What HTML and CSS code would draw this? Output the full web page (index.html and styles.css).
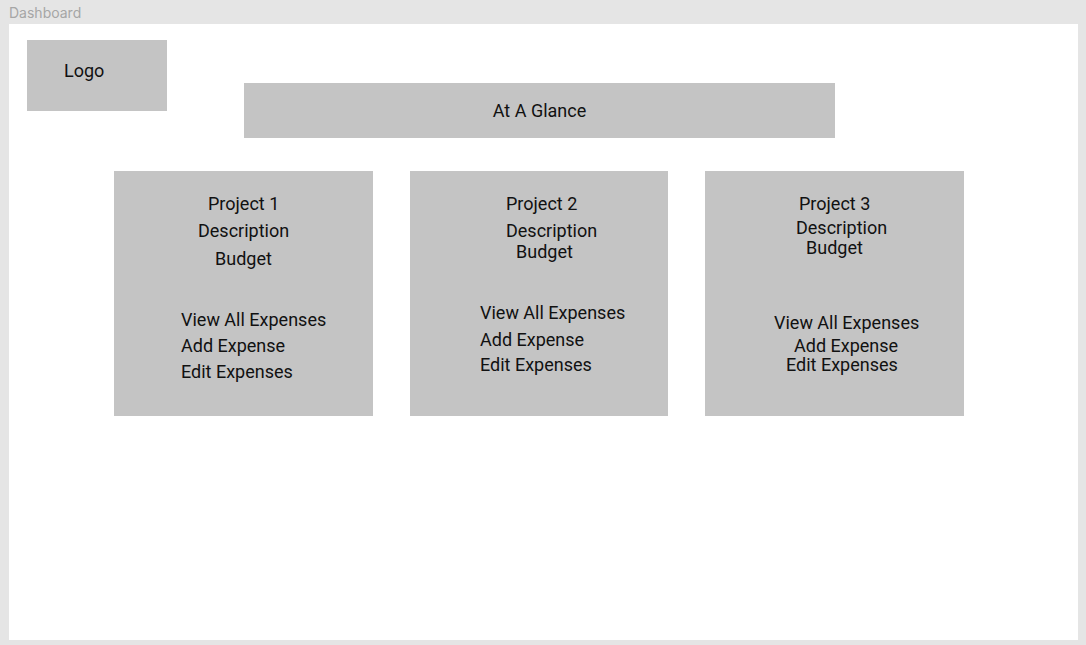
FILE: index.html
```html
<!DOCTYPE html>
<html lang="en">
<head>
<meta charset="UTF-8">
<meta name="viewport" content="width=device-width, initial-scale=1.0">
<title>Dashboard</title>
<link rel="stylesheet" href="styles.css">
</head>
<body>

<div class="frame-label">Dashboard</div>

<div class="frame">
    <div class="top-row">
        <div class="logo"><span class="line">Logo</span></div>
        <div class="glance">At A Glance</div>
    </div>

    <div class="cards">
        <div class="card card-1">
            <div class="line">Project 1</div>
            <div class="line">Description</div>
            <div class="line">Budget</div>
            <div class="line">View All Expenses</div>
            <div class="line">Add Expense</div>
            <div class="line">Edit Expenses</div>
        </div>
        <div class="card card-2">
            <div class="line">Project 2</div>
            <div class="line">Description</div>
            <div class="line">Budget</div>
            <div class="line">View All Expenses</div>
            <div class="line">Add Expense</div>
            <div class="line">Edit Expenses</div>
        </div>
        <div class="card card-3">
            <div class="line">Project 3</div>
            <div class="line">Description</div>
            <div class="line">Budget</div>
            <div class="line">View All Expenses</div>
            <div class="line">Add Expense</div>
            <div class="line">Edit Expenses</div>
        </div>
    </div>
</div>

</body>
</html>
```

FILE: styles.css
```css
body {
    margin: 0;
    background-color: #e5e5e5;
    font-family: Roboto, "Liberation Sans", sans-serif;
    color: #111;
}

.frame-label {
    height: 24px;
    padding-left: 9px;
    font-family: Inter, "Liberation Sans", sans-serif;
    font-size: 14px;
    line-height: 26px;
    color: #a6a6a6;
}

.frame {
    margin-left: 9px;
    width: 1069px;
    height: 616px;
    background-color: #fff;
    box-sizing: border-box;
    padding-top: 16px;
}

.top-row {
    display: flex;
    align-items: flex-start;
}

.logo {
    margin-left: 18px;
    width: 140px;
    height: 71px;
    background-color: #c4c4c4;
    box-sizing: border-box;
    padding: 20px 0 0 37px;
}

.line {
    display: block;
    font-size: 18px;
    line-height: 22px;
    white-space: nowrap;
}

.glance {
    margin: 43px 0 0 77px;
    width: 591px;
    height: 55px;
    background-color: #c4c4c4;
    display: flex;
    align-items: center;
    justify-content: center;
    font-size: 18px;
}

.cards {
    display: flex;
    gap: 37px;
    margin-top: 33px;
    padding-left: 105px;
}

.card {
    width: 259px;
    height: 245px;
    background-color: #c4c4c4;
    display: flex;
    flex-direction: column;
    align-items: flex-start;
}

.card-2 {
    width: 258px;
}

/* each wireframe label sits at its own spot */
.card-1 .line:nth-child(1) { margin: 22px 0 0 94px; }
.card-1 .line:nth-child(2) { margin: 5px 0 0 84px; }
.card-1 .line:nth-child(3) { margin: 6px 0 0 101px; }
.card-1 .line:nth-child(4) { margin: 39px 0 0 67px; }
.card-1 .line:nth-child(5) { margin: 4px 0 0 67px; }
.card-1 .line:nth-child(6) { margin: 4px 0 0 67px; }

.card-2 .line:nth-child(1) { margin: 22px 0 0 96px; }
.card-2 .line:nth-child(2) { margin: 5px 0 0 96px; }
.card-2 .line:nth-child(3) { margin: -1px 0 0 106px; }
.card-2 .line:nth-child(4) { margin: 39px 0 0 70px; }
.card-2 .line:nth-child(5) { margin: 5px 0 0 70px; }
.card-2 .line:nth-child(6) { margin: 3px 0 0 70px; }

.card-3 .line:nth-child(1) { margin: 22px 0 0 94px; }
.card-3 .line:nth-child(2) { margin: 2px 0 0 91px; }
.card-3 .line:nth-child(3) { margin: -2px 0 0 101px; }
.card-3 .line:nth-child(4) { margin: 53px 0 0 69px; }
.card-3 .line:nth-child(5) { margin: 1px 0 0 89px; }
.card-3 .line:nth-child(6) { margin: -3px 0 0 81px; }
```
